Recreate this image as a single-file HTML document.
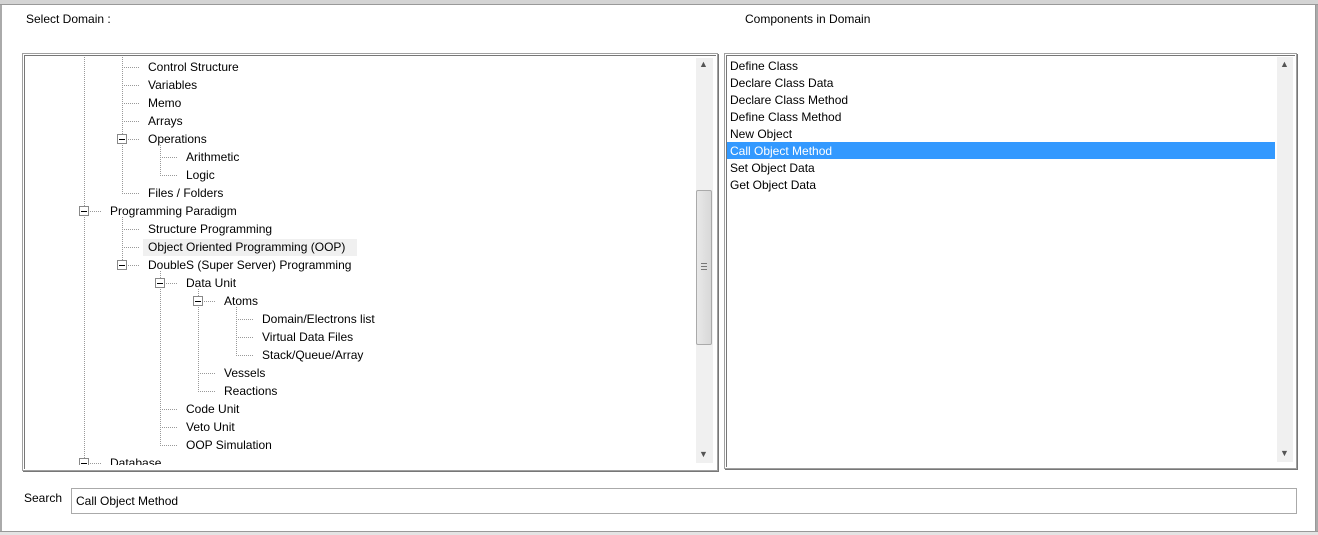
<!DOCTYPE html>
<html><head><style>
*{margin:0;padding:0;box-sizing:border-box}
body{width:1318px;height:535px;background:#fff;position:relative;overflow:hidden;font-family:"Liberation Sans",sans-serif;font-size:12px;color:#000}
.a{position:absolute;white-space:nowrap;line-height:14px}
.box{position:absolute;border:1px solid #a0a0a0;box-shadow:inset 1px 1px 0 #fff,inset -1px -1px 0 #fff,inset 2px 2px 0 #777,1px 1px 0 #777}
.sb{position:absolute;background:#f0f0f0}
.ar{position:absolute;font-size:9px;color:#555;line-height:9px}
</style></head><body>
<div style="position:absolute;left:0;top:0;width:1318px;height:5px;background:#d4d4d4;border-bottom:1px solid #999"></div>
<div style="position:absolute;left:0;top:5px;width:2px;height:530px;background:#aaa"></div>
<div style="position:absolute;left:1315px;top:5px;width:3px;height:530px;background:#aaa;border-left:1px solid #999"></div>
<div style="position:absolute;left:0;top:531px;width:1318px;height:4px;background:#e4e4e4;border-top:1px solid #999"></div>

<div class="a" style="left:26px;top:12px">Select Domain :</div>
<div class="a" style="left:745px;top:12px">Components in Domain</div>

<div class="box" style="left:22px;top:53px;width:696px;height:418px"></div>
<div style="position:absolute;left:25px;top:56px;width:690px;height:409px;overflow:hidden;background:#fff">
<svg width="690" height="409" style="position:absolute;left:0;top:0" shape-rendering="crispEdges">
<g transform="translate(-25,-55)" stroke="#999" stroke-width="1" stroke-dasharray="1,1" fill="none">
<path d="M84.5 56V470 M122.5 56V192 M122.5 216V264 M160.5 144V174 M160.5 270V444 M198.5 288V390 M236.5 306V354"/>
<path d="M122 66.5H140 M122 84.5H140 M122 102.5H140 M122 120.5H140 M128 138.5H140 M160 156.5H178 M160 174.5H178 M122 192.5H140 M90 210.5H102 M122 228.5H140 M122 246.5H140 M128 264.5H140 M166 282.5H178 M204 300.5H216 M236 318.5H254 M236 336.5H254 M236 354.5H254 M198 372.5H216 M198 390.5H216 M160 408.5H178 M160 426.5H178 M160 444.5H178 M90 462.5H102"/>
</g>
<g transform="translate(-25,-55)" fill="#fff" stroke="#888">
<rect x="117.5" y="133.5" width="9" height="9"/><rect x="79.5" y="205.5" width="9" height="9"/><rect x="117.5" y="259.5" width="9" height="9"/><rect x="155.5" y="277.5" width="9" height="9"/><rect x="193.5" y="295.5" width="9" height="9"/><rect x="79.5" y="457.5" width="9" height="9"/>
</g>
<g transform="translate(-25,-55)" stroke="#000">
<path d="M119 138.5H125 M81 210.5H87 M119 264.5H125 M157 282.5H163 M195 300.5H201 M81 462.5H87"/>
</g>
</svg>
<div style="position:absolute;left:118px;top:183px;width:214px;height:17px;background:#f0f0f0"></div>
<div style="position:relative;left:-25px;top:-55px">
<div class="a" style="left:148px;top:59px">Control Structure</div>
<div class="a" style="left:148px;top:77px">Variables</div>
<div class="a" style="left:148px;top:95px">Memo</div>
<div class="a" style="left:148px;top:113px">Arrays</div>
<div class="a" style="left:148px;top:131px">Operations</div>
<div class="a" style="left:186px;top:149px">Arithmetic</div>
<div class="a" style="left:186px;top:167px">Logic</div>
<div class="a" style="left:148px;top:185px">Files / Folders</div>
<div class="a" style="left:110px;top:203px">Programming Paradigm</div>
<div class="a" style="left:148px;top:221px">Structure Programming</div>
<div class="a" style="left:148px;top:239px">Object Oriented Programming (OOP)</div>
<div class="a" style="left:148px;top:257px">DoubleS (Super Server) Programming</div>
<div class="a" style="left:186px;top:275px">Data Unit</div>
<div class="a" style="left:224px;top:293px">Atoms</div>
<div class="a" style="left:262px;top:311px">Domain/Electrons list</div>
<div class="a" style="left:262px;top:329px">Virtual Data Files</div>
<div class="a" style="left:262px;top:347px">Stack/Queue/Array</div>
<div class="a" style="left:224px;top:365px">Vessels</div>
<div class="a" style="left:224px;top:383px">Reactions</div>
<div class="a" style="left:186px;top:401px">Code Unit</div>
<div class="a" style="left:186px;top:419px">Veto Unit</div>
<div class="a" style="left:186px;top:437px">OOP Simulation</div>
<div class="a" style="left:110px;top:455px">Database</div>
</div>
<div class="sb" style="left:671px;top:2px;width:17px;height:405px"></div>
<div class="ar" style="left:674px;top:4px">▲</div>
<div class="ar" style="left:674px;top:394px">▼</div>
<div style="position:absolute;left:671px;top:134px;width:16px;height:155px;background:linear-gradient(90deg,#e8e8e8,#d8d8d8);border:1px solid #aaa;border-radius:2px"></div>
<div style="position:absolute;left:676px;top:207px;width:6px;height:7px;border-top:1px solid #777;border-bottom:1px solid #777"><div style="margin-top:2px;border-top:1px solid #777"></div></div>
</div>

<div class="box" style="left:724px;top:53px;width:573px;height:416px"></div>
<div style="position:absolute;left:727px;top:56px;width:567px;height:407px;background:#fff">
<div style="position:absolute;left:0;top:86px;width:548px;height:17px;background:#3399ff"></div>
<div class="sb" style="left:550px;top:1px;width:16px;height:405px"></div>
<div class="ar" style="left:553px;top:4px">▲</div>
<div class="ar" style="left:553px;top:393px">▼</div>
</div>
<div class="a" style="left:730px;top:59px">Define Class</div>
<div class="a" style="left:730px;top:76px">Declare Class Data</div>
<div class="a" style="left:730px;top:93px">Declare Class Method</div>
<div class="a" style="left:730px;top:110px">Define Class Method</div>
<div class="a" style="left:730px;top:127px">New Object</div>
<div class="a" style="left:730px;top:144px;color:#fff">Call Object Method</div>
<div class="a" style="left:730px;top:161px">Set Object Data</div>
<div class="a" style="left:730px;top:178px">Get Object Data</div>

<div class="a" style="left:24px;top:491px">Search</div>
<div style="position:absolute;left:71px;top:488px;width:1226px;height:26px;border:1px solid #aaa"></div>
<div class="a" style="left:76px;top:494px">Call Object Method</div>
</body></html>
